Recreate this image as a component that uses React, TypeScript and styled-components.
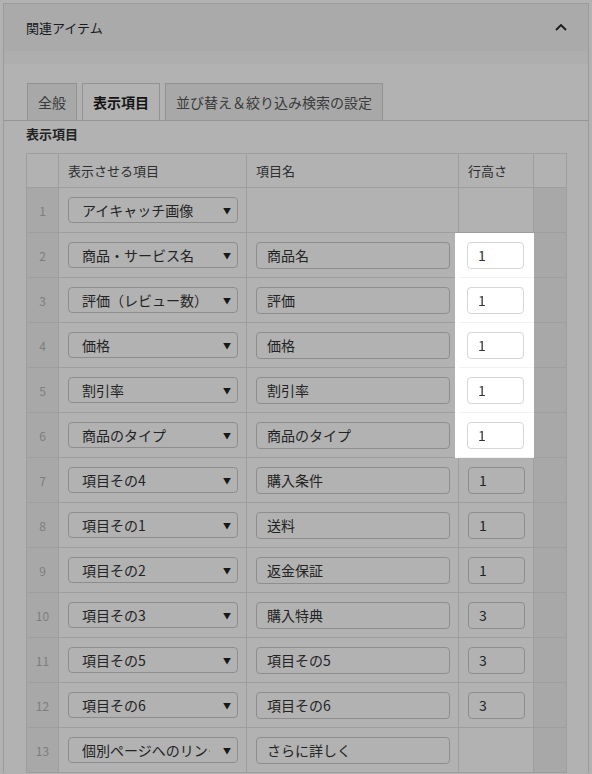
import styled, { createGlobalStyle } from "styled-components";

const GlobalStyle = createGlobalStyle`
  html, body {
    margin: 0;
    padding: 0;
    background: #fff;
  }
  body {
    font-family: "Noto Sans CJK JP", "Noto Sans", sans-serif;
    color: #333;
  }
`;

const Overlay = styled.div`
  position: fixed;
  inset: 0;
  z-index: 1;
  background: rgba(0, 0, 0, 0.3);
  pointer-events: none;
`;

const Page = styled.div`
  padding: 3px 3px 0;
`;
const Panel = styled.section`
  border: 1px solid #dedede;
  border-bottom: none;
  background: #fff;
`;
const PanelHeader = styled.header`
  height: 47px;
  display: flex;
  align-items: center;
  justify-content: space-between;
  padding: 0 21px 0 22px;
  background: #f4f4f4;
  font-size: 13px;
  color: #23282d;
`;
const Band = styled.div`
  height: 13px;
  background: #fafafa;
`;
const PanelBody = styled.div`
  padding-top: 19px;
`;
const TabBar = styled.div`
  display: flex;
  gap: 5px;
  padding-left: 23px;
  border-bottom: 1px solid #d6d6d6;
`;
const Tab = styled.div<{ $active?: boolean }>`
  height: 37px;
  box-sizing: border-box;
  display: flex;
  align-items: center;
  padding: 0 10px;
  border: 1px solid #d2d2d2;
  border-bottom: none;
  font-size: 14px;
  background: ${(p) => (p.$active ? "#fff" : "#f1f1f1")};
  color: ${(p) => (p.$active ? "#1e1e1e" : "#555")};
  font-weight: ${(p) => (p.$active ? 700 : 400)};
`;
const SectionLabel = styled.div`
  margin: 4px 22px 10px;
  font-size: 13px;
  font-weight: 700;
  line-height: 18px;
  color: #333;
`;
const Table = styled.table`
  margin: 0 22px;
  width: 541px;
  table-layout: fixed;
  border-collapse: separate;
  border-spacing: 0;
  border-top: 1px solid #e3e3e3;
  border-left: 1px solid #e3e3e3;
`;
const Col = styled.col<{ $w: number }>`
  width: ${(p) => p.$w}px;
`;
const HeadRow = styled.tr`
  height: 34px;
`;
const Row = styled.tr`
  height: 45px;
`;
const HeadCell = styled.th`
  padding: 0 9px;
  text-align: left;
  font-size: 13px;
  font-weight: 400;
  color: #444;
  border-right: 1px solid #e3e3e3;
  border-bottom: 1px solid #e3e3e3;
`;
const Cell = styled.td<{ $hl?: boolean; $shade?: boolean }>`
  padding: 0 9px;
  vertical-align: middle;
  border-right: 1px solid #e3e3e3;
  border-bottom: 1px solid #e3e3e3;
  background: ${(p) => (p.$shade ? "#f1f1f1" : "#fff")};
  ${(p) =>
    p.$hl &&
    `
    position: relative;
    z-index: 2;
    padding-left: 8px;
    border-right-color: #fff;
    border-bottom-color: #f2f2f2;
    box-shadow: -4px 0 0 #fff;
  `}
`;
const NumCell = styled(Cell)`
  padding: 0;
  text-align: center;
  font-size: 12px;
  color: #b4b4b4;
`;
const SelectWrap = styled.div`
  position: relative;
  width: 170px;
  &::after {
    content: "▼";
    position: absolute;
    right: 7px;
    top: 50%;
    transform: translateY(-50%);
    font-size: 8px;
    color: #222;
    pointer-events: none;
  }
`;
const Select = styled.select`
  appearance: none;
  display: block;
  width: 100%;
  height: 26px;
  box-sizing: border-box;
  border: 1px solid #cbcbcb;
  border-radius: 4px;
  background: #fff;
  padding: 0 27px 0 13px;
  font-family: inherit;
  font-size: 14px;
  color: #333;
  outline: none;
`;
const TextInput = styled.input<{ $w: number; $hl?: boolean }>`
  display: block;
  width: ${(p) => p.$w}px;
  height: 27px;
  box-sizing: border-box;
  border: 1px solid ${(p) => (p.$hl ? "#d6d6d6" : "#cbcbcb")};
  border-radius: 4px;
  background: #fff;
  padding: 0 10px;
  font-family: inherit;
  font-size: 14px;
  color: #333;
  outline: none;
`;

type Item = {
  field: string;
  name?: string;
  height?: number;
  hl?: boolean;
};

const items: Item[] = [
  { field: "アイキャッチ画像" },
  { field: "商品・サービス名", name: "商品名", height: 1, hl: true },
  { field: "評価（レビュー数）", name: "評価", height: 1, hl: true },
  { field: "価格", name: "価格", height: 1, hl: true },
  { field: "割引率", name: "割引率", height: 1, hl: true },
  { field: "商品のタイプ", name: "商品のタイプ", height: 1, hl: true },
  { field: "項目その4", name: "購入条件", height: 1 },
  { field: "項目その1", name: "送料", height: 1 },
  { field: "項目その2", name: "返金保証", height: 1 },
  { field: "項目その3", name: "購入特典", height: 3 },
  { field: "項目その5", name: "項目その5", height: 3 },
  { field: "項目その6", name: "項目その6", height: 3 },
  { field: "個別ページへのリンク", name: "さらに詳しく" },
];

const ChevronUp = () => (
  <svg width="12" height="7" viewBox="0 0 12 7">
    <polyline points="1,6 6,1 11,6" fill="none" stroke="#23282d" strokeWidth="1.8" />
  </svg>
);

const App = () => {
  return (
    <>
      <GlobalStyle />
      <Page>
        <Panel>
          <PanelHeader>
            <span>関連アイテム</span>
            <ChevronUp />
          </PanelHeader>
          <Band />
          <PanelBody>
            <TabBar>
              <Tab>全般</Tab>
              <Tab $active>表示項目</Tab>
              <Tab>並び替え＆絞り込み検索の設定</Tab>
            </TabBar>
            <SectionLabel>表示項目</SectionLabel>
            <Table>
              <colgroup>
                <Col $w={32} />
                <Col $w={188} />
                <Col $w={212} />
                <Col $w={75} />
                <Col $w={33} />
              </colgroup>
              <thead>
                <HeadRow>
                  <HeadCell />
                  <HeadCell>表示させる項目</HeadCell>
                  <HeadCell>項目名</HeadCell>
                  <HeadCell>行高さ</HeadCell>
                  <HeadCell />
                </HeadRow>
              </thead>
              <tbody>
                {items.map((item, index) => (
                  <Row key={index}>
                    <NumCell $shade>{index + 1}</NumCell>
                    <Cell>
                      <SelectWrap>
                        <Select defaultValue={item.field}>
                          <option value={item.field}>{item.field}</option>
                        </Select>
                      </SelectWrap>
                    </Cell>
                    <Cell>
                      {item.name && <TextInput $w={194} readOnly defaultValue={item.name} />}
                    </Cell>
                    <Cell $hl={item.hl}>
                      {item.height && (
                        <TextInput $w={57} $hl={item.hl} readOnly defaultValue={String(item.height)} />
                      )}
                    </Cell>
                    <Cell $shade />
                  </Row>
                ))}
              </tbody>
            </Table>
          </PanelBody>
        </Panel>
      </Page>
      <Overlay />
    </>
  );
};

export default App;
